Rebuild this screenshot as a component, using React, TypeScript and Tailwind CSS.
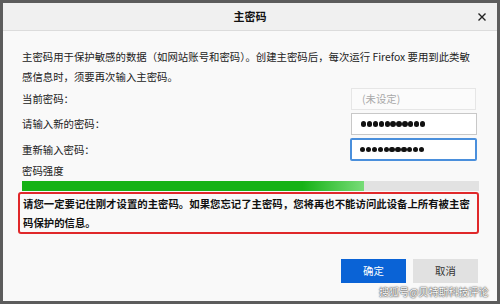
import React from 'react';

const font = { fontFamily: '"Noto Sans CJK SC", "Noto Sans", sans-serif' };

function Dots({ count }: { count: number }) {
  return (
    <div className="flex items-center gap-[0.6px]">
      {Array.from({ length: count }).map((_, i) => (
        <span key={i} className="w-[5.3px] h-[5.3px] rounded-full bg-[#111]" />
      ))}
    </div>
  );
}

function Row({ label, children }: { label: string; children: React.ReactNode }) {
  return (
    <div className="flex items-center justify-between">
      <span className="text-[10.4px] text-[#222]">{label}</span>
      {children}
    </div>
  );
}

export default function App() {
  return (
    <div className="w-[500px] h-[304px] bg-[#5c5c5c] pt-[3px] px-[3px] pb-[3px] flex flex-col relative overflow-hidden" style={font}>
      <div className="flex-1 flex flex-col bg-[#f9f9f9]">
        {/* header */}
        <div className="h-[28px] flex items-center justify-center relative bg-[#f0f0f0] border-b border-[#dcdcdc]">
          <span className="text-[11px] font-bold text-[#111]">主密码</span>
          <svg className="absolute right-[11px] top-[10px]" width="8" height="8" viewBox="0 0 8 8">
            <path d="M0.5 0.5 L7.5 7.5 M7.5 0.5 L0.5 7.5" stroke="#222" strokeWidth="1.4" />
          </svg>
        </div>

        {/* body */}
        <div className="flex-1 flex flex-col pl-[19px] pr-[20px] pt-[16px]">
          <div className="text-[10.4px] leading-[20px] text-[#222] whitespace-nowrap">
            <div>主密码用于保护敏感的数据（如网站账号和密码）。创建主密码后，每次运行 Firefox 要用到此类敏</div>
            <div>感信息时，须要再次输入主密码。</div>
          </div>

          <div className="flex flex-col gap-[3px] mt-[1px]">
            <Row label="当前密码：">
              <div className="w-[125px] h-[22px] mr-[1px] border border-[#e6e6e6] bg-[#fbfbfb] flex items-center pl-[10px] text-[10.4px] text-[#a8a8a8]">
                (未设定)
              </div>
            </Row>
            <Row label="请输入新的密码：">
              <div className="w-[126px] h-[22px] border border-[#c8c8c8] bg-white flex items-center pl-[9px]">
                <Dots count={11} />
              </div>
            </Row>
            <Row label="重新输入密码：">
              <div className="w-[127px] h-[23px] border-2 border-[#4a8fdc] rounded-[2px] bg-white flex items-center pl-[8px]">
                <Dots count={11} />
              </div>
            </Row>
          </div>

          <div className="text-[10.4px] leading-[20px] text-[#222]">密码强度</div>
          <div className="h-[10px] w-[457px] bg-[#e2e2e2] flex">
            <div className="h-full w-[342px] bg-[linear-gradient(to_right,#16b216_0%,#16b216_82%,#78dc78_100%)]" />
          </div>

          <div className="mt-[1px] -ml-[4px] w-[461px] h-[42px] border-2 border-[#e0282a] rounded-[3px] pl-[3px] text-[10.4px] leading-[19px] font-bold text-[#111] whitespace-nowrap">
            <div>请您一定要记住刚才设置的主密码。如果您忘记了主密码，您将再也不能访问此设备上所有被主密</div>
            <div>码保护的信息。</div>
          </div>

          <div className="flex justify-end gap-[7px] mt-[25px] -mr-[1px]">
            <button className="w-[65px] h-[24px] bg-[#0a63d6] text-white text-[10.4px]">确定</button>
            <button className="w-[65px] h-[24px] bg-[#e1e1e1] text-[#333] text-[10.4px]">取消</button>
          </div>
        </div>
      </div>

      <div className="absolute left-[379px] top-[285px] text-[10px] leading-[14px] text-white whitespace-nowrap [text-shadow:0_0_2px_#333,0_0_1px_#333]">
        搜狐号@贝特斯科技评论
      </div>
    </div>
  );
}
